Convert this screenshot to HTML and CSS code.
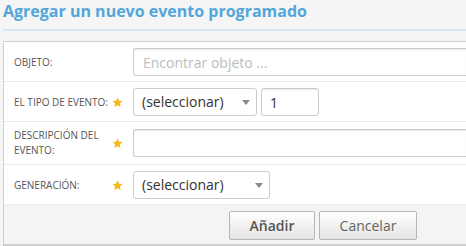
FILE: index.html
```html
<!DOCTYPE html>
<html lang="es">
<head>
<meta charset="utf-8">
<title>Agregar un nuevo evento programado</title>
<link rel="stylesheet" href="styles.css">
</head>
<body>
<div class="page">
  <h1 class="title">Agregar un nuevo evento programado</h1>
  <form class="box">
    <div class="row">
      <label class="lab">OBJETO:</label>
      <span class="star"></span>
      <input class="field wide" type="text" placeholder="Encontrar objeto ...">
    </div>
    <div class="row">
      <label class="lab">EL TIPO DE EVENTO:</label>
      <span class="star"><svg viewBox="0 0 10 10" width="11" height="11"><polygon points="5,0.3 6.3,3.4 9.6,3.6 7.1,5.8 7.9,9.2 5,7.4 2.1,9.2 2.9,5.8 0.4,3.6 3.7,3.4"/></svg></span>
      <div class="sel sel-type">(seleccionar)<span class="arrow"></span></div>
      <input class="field num" type="text" value="1">
    </div>
    <div class="row row-tall">
      <label class="lab">DESCRIPCIÓN DEL EVENTO:</label>
      <span class="star"><svg viewBox="0 0 10 10" width="11" height="11"><polygon points="5,0.3 6.3,3.4 9.6,3.6 7.1,5.8 7.9,9.2 5,7.4 2.1,9.2 2.9,5.8 0.4,3.6 3.7,3.4"/></svg></span>
      <input class="field wide" type="text">
    </div>
    <div class="row">
      <label class="lab">GENERACIÓN:</label>
      <span class="star"><svg viewBox="0 0 10 10" width="11" height="11"><polygon points="5,0.3 6.3,3.4 9.6,3.6 7.1,5.8 7.9,9.2 5,7.4 2.1,9.2 2.9,5.8 0.4,3.6 3.7,3.4"/></svg></span>
      <div class="sel sel-gen">(seleccionar)<span class="arrow"></span></div>
    </div>
    <div class="footer">
      <button type="button" class="btn btn-primary">Añadir</button>
      <button type="button" class="btn">Cancelar</button>
    </div>
  </form>
</div>
</body>
</html>
```
FILE: styles.css
```css
html, body {
  margin: 0;
  padding: 0;
  background: #f5f5f5;
  overflow: hidden;
}
body {
  font-family: "Open Sans", "DejaVu Sans", sans-serif;
  color: #333;
}
.page {
  padding: 0 0 0 3px;
}
.title {
  margin: 0;
  font-size: 16px;
  font-weight: 700;
  color: #52a6da;
  line-height: 22px;
  padding-bottom: 7px;
  border-bottom: 2px solid #d7e7f3;
}
.box {
  margin: 10px 0 0 0;
  background: #fff;
  border: 1px solid #cfcfcf;
  border-right: none;
  border-bottom-width: 2px;
}
.row {
  display: flex;
  align-items: center;
  padding: 6px 0 5px 10px;
  border-bottom: 1px solid #ebebeb;
}
.row-tall {
  padding: 6px 0 6px 10px;
}
.lab {
  width: 97px;
  font-size: 10px;
  line-height: 15px;
  color: #555;
}
.star {
  width: 12px;
  margin-right: 10px;
  display: flex;
  justify-content: center;
  align-items: center;
}
.star svg {
  display: block;
  fill: #f7b91a;
}
.field {
  height: 28px;
  box-sizing: border-box;
  border: 1px solid #cccccc;
  border-radius: 3px;
  box-shadow: inset 0 1px 1px rgba(0, 0, 0, 0.09);
  padding: 0 8px;
  font-family: "Open Sans", "DejaVu Sans", sans-serif;
  font-size: 14px;
  color: #333;
  background: #fff;
  outline: none;
}
.field::placeholder {
  color: #bdbdbd;
}
.wide {
  flex: 1;
  min-width: 0;
  padding-left: 9px;
  border-right: none;
  border-radius: 3px 0 0 3px;
}
.num {
  width: 58px;
  margin-left: 4px;
}
.sel {
  position: relative;
  height: 28px;
  box-sizing: border-box;
  border: 1px solid #cccccc;
  border-radius: 3px;
  padding: 0 8px;
  font-size: 14px;
  line-height: 26px;
  color: #333;
  background: #fff;
}
.sel-type {
  width: 124px;
}
.sel-gen {
  width: 137px;
}
.arrow {
  position: absolute;
  right: 6px;
  top: 11px;
  width: 0;
  height: 0;
  border-left: 4px solid transparent;
  border-right: 4px solid transparent;
  border-top: 5px solid #8a8a8a;
}
.footer {
  display: flex;
  justify-content: flex-end;
  gap: 4px;
  background: #f4f4f4;
  padding: 6px 49px 4px 0;
}
.btn {
  height: 29px;
  box-sizing: border-box;
  border: 1px solid #b5b5b5;
  border-radius: 2px;
  background: linear-gradient(#ffffff, #e4e4e4);
  font-family: "Open Sans", "DejaVu Sans", sans-serif;
  font-size: 14px;
  color: #666;
  padding: 0;
  margin: 0;
  width: 98px;
}
.btn-primary {
  width: 86px;
  font-weight: 600;
  color: #555;
}
```
